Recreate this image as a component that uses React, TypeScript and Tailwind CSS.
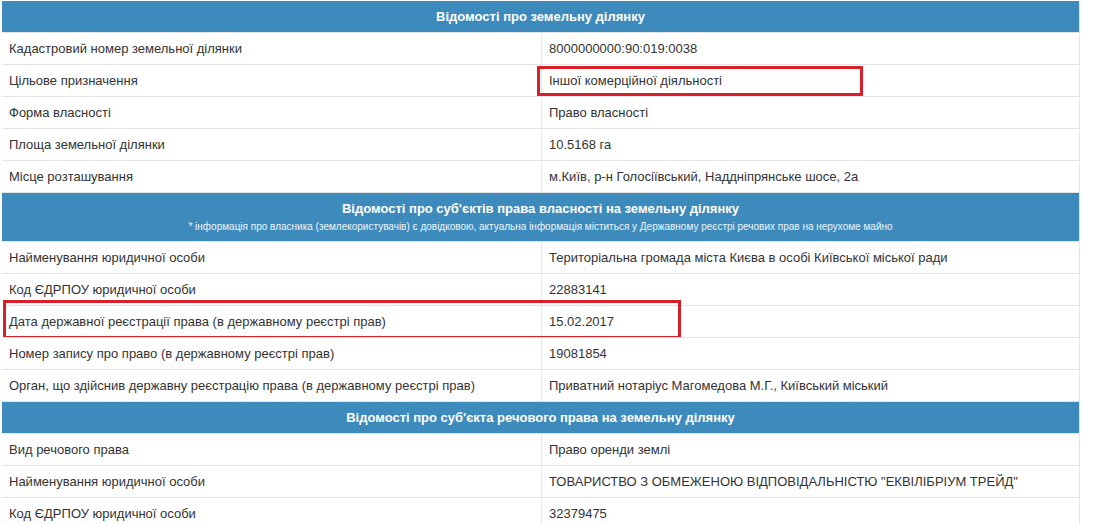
import { ReactNode } from "react";

type Row = { label: string; value: string; mark?: "value" | "row" };

const SECTIONS: { title: string; note?: string; rows: Row[] }[] = [
  {
    title: "Відомості про земельну ділянку",
    rows: [
      { label: "Кадастровий номер земельної ділянки", value: "8000000000:90:019:0038" },
      { label: "Цільове призначення", value: "Іншої комерційної діяльності", mark: "value" },
      { label: "Форма власності", value: "Право власності" },
      { label: "Площа земельної ділянки", value: "10.5168 га" },
      { label: "Місце розташування", value: "м.Київ, р-н Голосіївський, Наддніпрянське шосе, 2а" },
    ],
  },
  {
    title: "Відомості про суб'єктів права власності на земельну ділянку",
    note: "* інформація про власника (землекористувачів) є довідковою, актуальна інформація міститься у Державному реєстрі речових прав на нерухоме майно",
    rows: [
      { label: "Найменування юридичної особи", value: "Територіальна громада міста Києва в особі Київської міської ради" },
      { label: "Код ЄДРПОУ юридичної особи", value: "22883141" },
      { label: "Дата державної реєстрації права (в державному реєстрі прав)", value: "15.02.2017", mark: "row" },
      { label: "Номер запису про право (в державному реєстрі прав)", value: "19081854" },
      { label: "Орган, що здійснив державну реєстрацію права (в державному реєстрі прав)", value: "Приватний нотаріус Магомедова М.Г., Київський міський" },
    ],
  },
  {
    title: "Відомості про суб'єкта речового права на земельну ділянку",
    rows: [
      { label: "Вид речового права", value: "Право оренди землі" },
      { label: "Найменування юридичної особи", value: "ТОВАРИСТВО З ОБМЕЖЕНОЮ ВІДПОВІДАЛЬНІСТЮ \"ЕКВІЛІБРІУМ ТРЕЙД\"" },
      { label: "Код ЄДРПОУ юридичної особи", value: "32379475" },
    ],
  },
];

function Header({ title, note }: { title: string; note?: string }) {
  return (
    <div
      className={[
        "flex flex-col items-center justify-center bg-[#3d8bbd] text-white",
        note ? "h-[48px] gap-[7px]" : "h-[31px]",
      ].join(" ")}
    >
      <div className="text-[13px] font-bold leading-none">{title}</div>
      {note && <div className="text-[10px] leading-none text-white/90">{note}</div>}
    </div>
  );
}

function Cell({ children, className }: { children: ReactNode; className?: string }) {
  return <div className={["flex h-full items-center", className].join(" ")}>{children}</div>;
}

function DataRow({ row }: { row: Row }) {
  return (
    <div className="relative grid h-[32px] grid-cols-[539px_1fr] border-t border-[#e4e4e4] bg-white">
      <Cell className="pl-[7px]">{row.label}</Cell>
      <Cell className="border-l border-[#e8e8e8] pl-[7px]">{row.value}</Cell>
      {row.mark === "value" && (
        <div className="pointer-events-none absolute left-[535px] top-[1px] h-[30px] w-[326px] border-[3px] border-[#d9202a]" />
      )}
      {row.mark === "row" && (
        <div className="pointer-events-none absolute left-[1px] top-[-6px] h-[39px] w-[678px] border-[3px] border-[#d9202a]" />
      )}
    </div>
  );
}

export default function App() {
  return (
    <main className="h-[524px] w-[1096px] overflow-hidden bg-white pl-[2px] pt-[1px] font-['Liberation_Sans',Arial,sans-serif] text-[13px] text-[#333]">
      <div className="w-[1078px] border-r border-[#e4e4e4]">
        {SECTIONS.map((s) => (
          <section key={s.title} className="border-b border-[#e4e4e4]">
            <Header title={s.title} note={s.note} />
            {s.rows.map((r) => (
              <DataRow key={r.label + r.value} row={r} />
            ))}
          </section>
        ))}
      </div>
    </main>
  );
}
